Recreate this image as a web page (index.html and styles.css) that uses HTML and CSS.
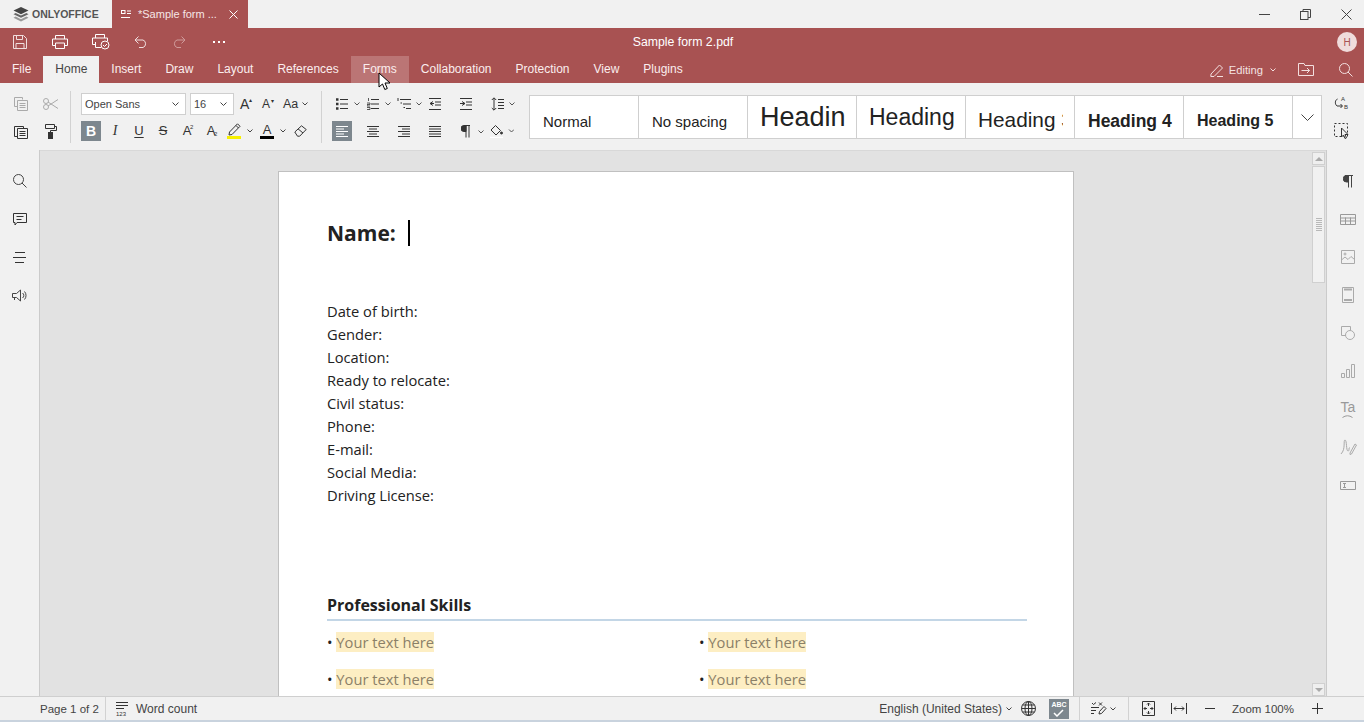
FILE: index.html
```html
<!DOCTYPE html>
<html lang="en">
<head>
<meta charset="utf-8">
<title>Sample form 2.pdf</title>
<link rel="stylesheet" href="styles.css">
</head>
<body>
<div class="app">
  <div class="titlebar">
    <div class="logo">
      <svg width="16" height="15" viewBox="0 0 16 15"><path d="M8 0 15.500 3.600 8 7.200.5 3.600Z" fill="#444"/><path d="M2.600 6 8 8.600 13.400 6 15.500 7.200 8 10.800.5 7.200Z" fill="#666"/><path d="M2.600 9.600 8 12.200 13.400 9.600 15.500 10.800 8 14.400.5 10.800Z" fill="#999"/></svg>
      <span>ONLYOFFICE</span>
    </div>
    <div class="doctab">
      <svg width="10" height="9" viewBox="0 0 10 9" fill="none" stroke="#fff"><rect x=".5" y=".5" width="3.500" height="3"/><path d="M6 1h4M6 3.500h4M0 7.500h9"/></svg>
      <span class="doctab-name">*Sample form ...</span>
      <svg width="9" height="9" viewBox="0 0 9 9" stroke="#fff" fill="none"><path d="M.5.500l8 8M8.500.5l-8 8"/></svg>
    </div>
    <div class="winbtns">
      <svg width="11" height="11" viewBox="0 0 11 11" stroke="#444" fill="none"><path d="M0 5.500h11"/></svg>
      <svg width="11" height="11" viewBox="0 0 11 11" stroke="#444" fill="none"><rect x=".5" y="2.500" width="7.500" height="8"/><path d="M3 2.500V.5h7.500v8H8"/></svg>
      <svg width="11" height="11" viewBox="0 0 11 11" stroke="#444" fill="none"><path d="M.5.500l10 10M10.500.5l-10 10"/></svg>
    </div>
  </div>

  <header class="ribbon">
    <div class="quick">
      <svg class="q q1" width="14" height="14" viewBox="0 0 14 14" fill="none" stroke="#f0dede"><path d="M.5.500h10l3 3v10H.5Z"/><path d="M3.500.5v4h6v-4M3 13.500v-5h8v5"/></svg>
      <svg class="q q2" width="16" height="14" viewBox="0 0 16 14" fill="none" stroke="#fff"><path d="M3.500 4V.5h9V4M3.500 10.500H.5V4h15v6.500h-3"/><path d="M3.500 8h9v5.500h-9Z"/></svg>
      <svg class="q q3" width="18" height="16" viewBox="0 0 18 16" fill="none" stroke="#fff"><path d="M3.500 4V.5h9V4M3.500 10.500H.5V4h15v3M3.500 8v5.500H9"/><circle cx="13" cy="11" r="4"/><path d="M11 11l1.500 1.500L15 10"/></svg>
      <svg class="q q4" width="14" height="12" viewBox="0 0 14 12" fill="none" stroke="#f0dede"><path d="M4.500.5 1 4l3.500 3.500M1 4h8a4 4 0 0 1 0 7.500H5"/></svg>
      <svg class="q q5" width="14" height="12" viewBox="0 0 14 12" fill="none" stroke="#cf9a9a"><path d="M9.500.5 13 4 9.500 7.500M13 4H5a4 4 0 0 0 0 7.500h4"/></svg>
      <svg class="q q6" width="12" height="3" viewBox="0 0 12 3" fill="#fff"><rect width="2" height="2"/><rect x="5" width="2" height="2"/><rect x="10" width="2" height="2"/></svg>
      <div class="filetitle">Sample form 2.pdf</div>
      <div class="avatar">H</div>
    </div>
    <nav class="tabs">
      <span class="tab">File</span>
      <span class="tab active">Home</span>
      <span class="tab">Insert</span>
      <span class="tab">Draw</span>
      <span class="tab">Layout</span>
      <span class="tab">References</span>
      <span class="tab hover">Forms</span>
      <span class="tab">Collaboration</span>
      <span class="tab">Protection</span>
      <span class="tab">View</span>
      <span class="tab">Plugins</span>
      <div class="tabs-right">
        <svg width="14" height="14" viewBox="0 0 14 14" fill="none" stroke="#f3dfdf"><path d="M1 11 9.500 2l3 3L4 13.500H.8ZM7 13.500h6"/></svg>
        <span class="editing">Editing</span>
        <svg class="caret-light" width="6" height="4" viewBox="0 0 6 4" fill="none" stroke="#f3dfdf"><path d="M.5.500 3 3 5.500.5"/></svg>
        <svg class="folder" width="16" height="13" viewBox="0 0 16 13" fill="none" stroke="#f3dfdf"><path d="M.5 12.500V.5H6l1 2h8.500v10ZM3.500 7.500h8M9 5l2.500 2.500L9 10"/></svg>
        <svg class="findtop" width="14" height="14" viewBox="0 0 14 14" fill="none" stroke="#f3dfdf"><circle cx="5.500" cy="5.500" r="5"/><path d="M9 9l4.500 4.500"/></svg>
      </div>
    </nav>
  </header>

  <section class="toolbar">
    <div class="tgroup g1">
      <svg width="14" height="14" viewBox="0 0 14 14" fill="none" stroke="#aaa"><path d="M.5.500h8v2M.5.500v9h3"/><path d="M3.500 3.500h10v10h-10ZM5.500 6.500h6M5.500 8.500h6M5.500 10.500h6"/></svg>
      <svg width="16" height="12" viewBox="0 0 16 12" fill="none" stroke="#aaa"><circle cx="3" cy="3" r="2.500"/><circle cx="3" cy="9" r="2.500"/><path d="M5 4l10 6.500M5 8 15 1.500"/></svg>
      <svg width="14" height="14" viewBox="0 0 14 14" fill="none" stroke="#333"><path d="M.5 1.500h9v2M.5 1.500v10h3"/><path d="M3.500 3.500h10v10h-10ZM5.500 6.500h6M5.500 8.500h6M5.500 10.500h6"/></svg>
      <svg width="12" height="15" viewBox="0 0 12 15" fill="none" stroke="#333"><path d="M.5.500h9v4h-9ZM9.500 2.500h2v4H5.500v2"/><rect x="3.500" y="8.500" width="4" height="6" fill="#333"/></svg>
    </div>
    <div class="tsep"></div>
    <div class="tgroup2">
      <div class="trow">
        <div class="combo font-combo"><span>Open Sans</span><svg width="7" height="4" viewBox="0 0 7 4" fill="none" stroke="#444"><path d="M.5.500 3.500 3.500 6.500.5"/></svg></div>
        <div class="combo size-combo"><span>16</span><svg width="7" height="4" viewBox="0 0 7 4" fill="none" stroke="#444"><path d="M.5.500 3.500 3.500 6.500.5"/></svg></div>
        <span class="glyph glyph-up">A<sup>▴</sup></span>
        <span class="glyph glyph-down">A<sup>▾</sup></span>
        <span class="glyph glyph-case">Aa</span>
        <svg class="tcaret" width="6" height="4" viewBox="0 0 6 4" fill="none" stroke="#444"><path d="M.5.500 3 3 5.500.5"/></svg>
      </div>
      <div class="trow row2">
        <span class="fmt bold">B</span>
        <span class="fmt italic">I</span>
        <span class="fmt under">U</span>
        <span class="fmt strike">S</span>
        <span class="fmt script">A<sup>2</sup></span>
        <span class="fmt script">A<sub>2</sub></span>
        <span class="colorbtn hl">
          <svg width="13" height="13" viewBox="0 0 13 13" fill="none" stroke="#333"><path d="M1 12 1.500 9 9.500.8l2.500 2.500-8 8.200ZM8 2.500l2.500 2.500"/></svg>
          <i class="swatch sw-yellow"></i>
        </span>
        <svg class="ccaret" width="6" height="4" viewBox="0 0 6 4" fill="none" stroke="#444"><path d="M.5.500 3 3 5.500.5"/></svg>
        <span class="colorbtn fc">
          <span class="fc-a">A</span>
          <i class="swatch sw-black"></i>
        </span>
        <svg class="ccaret" width="6" height="4" viewBox="0 0 6 4" fill="none" stroke="#444"><path d="M.5.500 3 3 5.500.5"/></svg>
        <svg class="eraser" width="13" height="12" viewBox="0 0 13 12" fill="none" stroke="#333"><path d="M.8 7 7.500.8l4.700 3.700-6.500 6.700H3.500ZM4 3.800 9 8"/></svg>
      </div>
    </div>
    <div class="tsep sep2"></div>
    <div class="tgroup3">
      <svg class="i1" width="24" height="12" viewBox="0 0 24 12" fill="none" stroke="#333"><path d="M4 1.500h8M4 6h8M4 10.500h8"/><path d="M0 1.500h2.500M0 6h2.500M0 10.500h2.500" stroke-width="2.400"/><path d="M18.500 4.500l2.500 2.500 2.500-2.500" stroke="#555"/></svg>
      <svg class="i2" width="24" height="12" viewBox="0 0 24 12" fill="none" stroke="#333"><path d="M4 1.500h8M4 6h8M4 10.500h8"/><path d="M1.500 0v3M0 5h3v1.500H0V8h3M0 9.500h3v2H0" stroke-width=".8"/><path d="M18.500 4.500l2.500 2.500 2.500-2.500" stroke="#555"/></svg>
      <svg class="i3" width="25" height="12" viewBox="0 0 25 12" fill="none" stroke="#333"><path d="M3 1.500h11M6 6h8M9 10.500h5"/><path d="M1 0v3M3.500 5h1.500M6.500 9.500h1.500"/><path d="M19.500 4.500l2.500 2.500 2.500-2.500" stroke="#555"/></svg>
      <svg class="i4" width="12" height="12" viewBox="0 0 12 12" fill="none" stroke="#333"><path d="M0 .5h12M6 4h6M6 7h6M0 11.500h12M4 3.500 1 5.500l3 2M1 5.500h4"/></svg>
      <svg class="i5" width="12" height="12" viewBox="0 0 12 12" fill="none" stroke="#333"><path d="M0 .5h12M6 4h6M6 7h6M0 11.500h12M2 3.500l3 2-3 2M0 5.500h5"/></svg>
      <svg class="i6" width="24" height="14" viewBox="0 0 24 14" fill="none" stroke="#333"><path d="M3 1v12M.8 3 3 .8 5.200 3M.8 11 3 13.200 5.200 11M7 2.500h6M7 5.500h6M7 8.500h6M7 11.500h6"/><path d="M18.500 5.500l2.500 2.500 2.500-2.500" stroke="#555"/></svg>
    </div>
    <div class="tgroup4">
      <span class="algn on">
        <svg width="12" height="11" viewBox="0 0 12 11" fill="none" stroke="#fff"><path d="M0 .5h12M0 3h8M0 5.500h12M0 8h8M0 10.500h12"/></svg>
      </span>
      <svg class="a2" width="12" height="11" viewBox="0 0 12 11" fill="none" stroke="#333"><path d="M0 .5h12M2 3h8M0 5.500h12M2 8h8M0 10.500h12"/></svg>
      <svg class="a3" width="12" height="11" viewBox="0 0 12 11" fill="none" stroke="#333"><path d="M0 .5h12M4 3h8M0 5.500h12M4 8h8M0 10.500h12"/></svg>
      <svg class="a4" width="12" height="11" viewBox="0 0 12 11" fill="none" stroke="#333"><path d="M0 .5h12M0 3h12M0 5.500h12M0 8h12M0 10.500h12"/></svg>
      <svg class="a5" width="26" height="13" viewBox="0 0 26 13" fill="none" stroke="#333"><path d="M3 .5h6M5 .5v12M8 .5v12"/><path d="M5 .5H3a2.500 2.500 0 0 0 0 6h2Z" fill="#333"/><path d="M17.500 5.500 20 8l2.500-2.500" stroke="#555"/></svg>
      <svg class="a6" width="24" height="14" viewBox="0 0 24 14" fill="none" stroke="#333"><path d="M1 6 5.500 1.500l5 5L6 11Z"/><circle cx="11.500" cy="9" r="1" fill="#333"/><path d="M0 13.500h13" stroke="#fff" stroke-width="1.500"/><path d="M19 5.500l2.500 2.500L24 5.500" stroke="#555"/></svg>
    </div>
    <div class="gallery">
      <div class="style st-normal">Normal</div>
      <div class="style st-normal">No spacing</div>
      <div class="style st-h1">Headin</div>
      <div class="style st-h2">Heading</div>
      <div class="style st-h3"><span>Heading 3</span></div>
      <div class="style st-h4">Heading 4</div>
      <div class="style st-h5">Heading 5</div>
      <div class="gallery-more"><svg width="13" height="7" viewBox="0 0 13 7" fill="none" stroke="#444"><path d="M.5.500l6 6 6-6"/></svg></div>
    </div>
    <div class="tgroup5">
      <svg width="16" height="14" viewBox="0 0 16 14" fill="none" stroke="#333"><path d="M3.500 3C1 4 .5 8 3 10h5M6.500 8 8.500 10 6.500 12"/><text x="7" y="5" class="mini">A</text><text x="10" y="13" class="mini">B</text></svg>
      <svg width="15" height="16" viewBox="0 0 15 16" fill="none" stroke="#333"><rect x=".5" y=".5" width="13" height="13" stroke-dasharray="2 2"/><path d="M7.500 5v9l2-2 1.500 3.500 1.500-.7-1.500-3.300h3Z" fill="#f1f1f1"/></svg>
    </div>
  </section>

  <main class="workspace">
    <aside class="leftpanel">
      <svg width="14" height="14" viewBox="0 0 14 14" fill="none" stroke="#444"><circle cx="5.500" cy="5.500" r="5"/><path d="M9 9l4.500 4.500"/></svg>
      <svg width="14" height="13" viewBox="0 0 14 13" fill="none" stroke="#333"><path d="M.5.500h13v9H4L2 12V9.500H.5ZM3.500 3.500h7M3.500 6.500h5"/></svg>
      <svg width="14" height="11" viewBox="0 0 14 11" fill="none" stroke="#333"><path d="M2 .5h10M0 5.500h13M2 10.500h9"/></svg>
      <svg width="15" height="13" viewBox="0 0 15 13" fill="none" stroke="#444"><path d="M.5 4.500h4l4-3.500v11l-4-3.500h-4ZM2.500 8.500V11M10.500 4a3 3 0 0 1 0 5M12.500 2.500a6 6 0 0 1 0 8"/></svg>
    </aside>
    <div class="canvas">
      <div class="docarea">
        <article class="page">
          <h1 class="doc-name">Name: <span class="cursor"></span></h1>
          <ul class="fields">
            <li>Date of birth:</li>
            <li>Gender:</li>
            <li>Location:</li>
            <li>Ready to relocate:</li>
            <li>Civil status:</li>
            <li>Phone:</li>
            <li>E-mail:</li>
            <li>Social Media:</li>
            <li>Driving License:</li>
          </ul>
          <h2 class="doc-section">Professional Skills</h2>
          <div class="skills">
            <p>• <mark>Your text here</mark></p>
            <p>• <mark>Your text here</mark></p>
            <p>• <mark>Your text here</mark></p>
            <p>• <mark>Your text here</mark></p>
          </div>
        </article>
      </div>
      <div class="scrollbar">
        <div class="sb-btn"><svg width="8" height="4" viewBox="0 0 8 4" fill="#aaa"><path d="M0 4 4 0l4 4Z"/></svg></div>
        <div class="sb-thumb"><i></i></div>
        <div class="sb-space"></div>
        <div class="sb-btn"><svg width="8" height="4" viewBox="0 0 8 4" fill="#aaa"><path d="M0 0h8L4 4Z"/></svg></div>
      </div>
    </div>
    <aside class="rightpanel">
      <svg width="10" height="13" viewBox="0 0 10 13" fill="none" stroke="#444"><path d="M2 .5h8M5.500.5v12M8.500.5v12"/><path d="M5.500.5H3.500a2.800 2.800 0 0 0 0 6.500h2Z" fill="#444"/></svg>
      <svg width="16" height="11" viewBox="0 0 16 11" fill="none" stroke="#999"><path d="M.5.500h15v10H.5ZM.5 4h15M.5 7h15M5.500 3.500v7M10.500 3.500v7" /></svg>
      <svg width="14" height="14" viewBox="0 0 14 14" fill="none" stroke="#aaa"><path d="M.5.500h13v13H.5ZM.5 10 4 7l3 2.500 3-3 3.500 3"/><circle cx="4" cy="4" r="1"/></svg>
      <svg width="12" height="16" viewBox="0 0 12 16" fill="none" stroke="#aaa"><path d="M.5.500h11v15H.5Z"/><path d="M2 2.500h8M2 13h8" stroke-width="2"/></svg>
      <svg width="14" height="14" viewBox="0 0 14 14" fill="none" stroke="#aaa"><path d="M5 9.500H.5V.5h9V4"/><circle cx="9" cy="9" r="4.500" fill="#f1f1f1"/></svg>
      <svg width="14" height="14" viewBox="0 0 14 14" fill="none" stroke="#aaa"><path d="M.5 9.500h3v4h-3ZM5.500 5.500h3v8h-3ZM10.500.5h3v13h-3Z"/></svg>
      <span class="ta"><span>Ta</span><svg width="11" height="3" viewBox="0 0 11 3" fill="none" stroke="#999"><path d="M.5 2.500Q5.500-1 10.500 2.500"/></svg></span>
      <svg width="17" height="16" viewBox="0 0 17 16" fill="none" stroke="#aaa"><path d="M1 15C6 10 3 1 5 1s1 11 3 11 0-4 2-3M10 14l5-9 1.500 1-5 9-1.500.5Z"/></svg>
      <svg width="16" height="9" viewBox="0 0 16 9" fill="none" stroke="#999"><path d="M.5.500h15v8H.5ZM3 2.500h3M4.500 2.500v4M3 6.500h3"/></svg>
    </aside>
  </main>

  <footer class="statusbar">
    <span class="st-page">Page 1 of 2</span>
    <span class="st-sep"></span>
    <svg class="wc-ico" width="13" height="14" viewBox="0 0 13 14" fill="none" stroke="#333"><path d="M0 .5h12M0 3.500h12M0 6.500h8"/><text x="0" y="14" class="mini">123</text></svg>
    <span class="st-wc">Word count</span>
    <div class="st-right">
      <span class="st-lang">English (United States)</span>
      <svg class="st-caret lang-caret" width="6" height="4" viewBox="0 0 6 4" fill="none" stroke="#444"><path d="M.5.500 3 3 5.500.5"/></svg>
      <svg class="globe" width="15" height="15" viewBox="0 0 15 15" fill="none" stroke="#333"><circle cx="7.500" cy="7.500" r="7"/><ellipse cx="7.500" cy="7.500" rx="3.500" ry="7"/><path d="M7.500.5v14M.5 7.500h14M1.500 4h12M1.500 11h12"/></svg>
      <span class="spell"><span>ABC</span><svg width="11" height="8" viewBox="0 0 11 8" fill="none" stroke="#fff" stroke-width="1.500"><path d="M1 4l3 3 6-6"/></svg></span>
      <span class="st-sep sep-a"></span>
      <svg class="track" width="16" height="13" viewBox="0 0 16 13" fill="none" stroke="#333"><path d="M0 5.500h8M0 8.500h5M0 11.500h3M8 12l.5-2.500L13 4.500l2 2-4.500 5ZM1 1l1.500 1.500L5 .5M8 .5l3 3M11 .5l-3 3"/></svg>
      <svg class="st-caret caret-b" width="6" height="4" viewBox="0 0 6 4" fill="none" stroke="#444"><path d="M.5.500 3 3 5.500.5"/></svg>
      <span class="st-sep sep-b"></span>
      <svg class="fit" width="13" height="15" viewBox="0 0 13 15" fill="none" stroke="#333"><path d="M.5.500h12v14H.5ZM6.500 2v3M5 3.500l1.500-1.500L8 3.500M6.500 13v-3M5 11.500 6.500 13 8 11.500M2 7.500h3M3.500 6 2 7.500 3.500 9M11 7.500H8M9.500 6 11 7.500 9.500 9"/></svg>
      <svg class="fitw" width="16" height="11" viewBox="0 0 16 11" fill="none" stroke="#333"><path d="M.5 0v11M15.500 0v11M3 5.500h10M5 3.500l-2 2 2 2M11 3.500l2 2-2 2"/></svg>
      <svg class="minus" width="10" height="1" viewBox="0 0 10 1" stroke="#333"><path d="M0 .5h10"/></svg>
      <span class="st-zoom">Zoom 100%</span>
      <svg class="plus" width="11" height="11" viewBox="0 0 11 11" stroke="#333"><path d="M0 5.500h11M5.500 0v11"/></svg>
    </div>
  </footer>
</div>
<svg class="pointer" width="13" height="19" viewBox="0 0 13 19"><path d="M1 1v14l3.500-3 2.300 5.500 2.500-1L7 11h5Z" fill="#fff" stroke="#000"/></svg>
</body>
</html>
```
FILE: styles.css
```css
* { box-sizing: border-box; }
html, body { margin: 0; height: 100%; overflow: hidden; }
body { font-family: "Liberation Sans", Arial, sans-serif; color: #333; background: #f1f1f1; }
svg { display: block; flex: none; }
.mini { font: 6px "Liberation Sans", sans-serif; fill: #333; stroke: none; }

.app { width: 1364px; height: 722px; display: flex; flex-direction: column; overflow: hidden; }

/* title bar */
.titlebar { height: 28px; flex: none; display: flex; align-items: stretch; background: #f1f1f1; }
.logo { width: 112px; padding-left: 13px; display: flex; align-items: center; gap: 3px; font-weight: bold; font-size: 10.500px; color: #555; }
.doctab { width: 136px; background: #a85252; color: #f6e6e6; display: flex; align-items: center; padding: 0 10px 0 9px; font-size: 11px; }
.doctab-name { margin-left: 7px; flex: 1; white-space: nowrap; }
.winbtns { margin-left: auto; display: flex; align-items: center; gap: 30px; padding-right: 12px; }

/* ribbon */
.ribbon { flex: none; background: #a85252; height: 55px; color: #fff; }
.quick { height: 28px; position: relative; display: flex; align-items: center; }
.q1 { margin-left: 13px; }
.q2 { margin-left: 25px; }
.q3 { margin-left: 24px; }
.q4 { margin-left: 24px; }
.q5 { margin-left: 24px; }
.q6 { margin-left: 27px; }
.filetitle { position: absolute; left: 0; right: -2px; text-align: center; font-size: 12.300px; color: #fff; }
.avatar { margin-left: auto; margin-right: 7px; width: 20px; height: 20px; border-radius: 50%; background: #f0dcdc; color: #a85252; font-size: 10px; display: flex; align-items: center; justify-content: center; }
.tabs { height: 27px; display: flex; align-items: stretch; font-size: 12px; }
.tab { padding: 0 12px 2px; display: flex; align-items: center; color: #fbeeee; }
.tab.active { background: #f1f1f1; color: #444; }
.tab.hover { background: #bb7575; }
.tabs-right { margin-left: auto; display: flex; align-items: center; color: #f3dfdf; padding-right: 11px; }
.editing { margin-left: 5px; font-size: 11.200px; color: #f3e2e2; }
.caret-light { margin-left: 7px; }
.folder { margin-left: 22px; }
.findtop { margin-left: 25px; }

/* toolbar */
.toolbar { height: 67px; flex: none; display: flex; align-items: stretch; background: #f1f1f1; position: relative; }
.tgroup { width: 70px; display: grid; grid-template-columns: 31px 30px; grid-template-rows: 28px 27px; padding: 7px 0 0 5px; justify-items: center; align-items: center; }
.tsep { width: 1px; margin: 8px 0 7px; background: #d2d2d2; flex: none; }
.tgroup2 { width: 250px; padding: 10px 0 0 10px; display: flex; flex-direction: column; gap: 6px; }
.trow { display: flex; align-items: center; height: 22px; }
.combo { height: 22px; background: #fff; border: 1px solid #cfcfcf; display: flex; align-items: center; justify-content: space-between; padding: 0 6px 0 3px; font-size: 11px; color: #444; }
.font-combo { width: 105px; }
.size-combo { width: 44px; margin-left: 4px; }
.glyph { font-size: 13px; color: #333; position: relative; }
.glyph sup { font-size: 6px; position: absolute; top: 0; left: 9px; }
.glyph-up { margin-left: 6px; font-size: 14px; width: 22px; }
.glyph-down { font-size: 12px; width: 19px; }
.glyph-case { margin-left: 2px; font-size: 12.500px; }
.tcaret { margin-left: 4px; }
.row2 { height: 20px; }
.fmt { width: 24px; text-align: center; font-size: 13px; color: #333; position: relative; line-height: 20px; }
.fmt sup, .fmt sub { font-size: 6px; position: absolute; line-height: 1; }
.fmt sup { top: 3px; left: 15px; }
.fmt sub { bottom: 4px; left: 15px; }
.bold { width: 20px; height: 20px; background: #7d878e; color: #fff; font-weight: bold; font-size: 14px; margin-right: 2px; }
.italic { font-style: italic; font-family: "Liberation Serif", serif; font-size: 14px; }
.under { text-decoration: underline; text-underline-offset: 2px; }
.strike { text-decoration: line-through; }
.colorbtn { position: relative; display: flex; flex-direction: column; align-items: center; width: 16px; }
.swatch { display: block; width: 14px; height: 3px; margin-top: 0; }
.sw-yellow { background: #f7f000; }
.sw-black { background: #000; }
.hl { margin-left: 3px; }
.fc { margin-left: 6px; }
.fc-a { font-size: 13px; line-height: 13px; color: #333; }
.ccaret { margin-left: 5px; }
.eraser { margin-left: 8px; }

.tgroup3, .tgroup4 { position: absolute; left: 322px; width: 200px; display: flex; align-items: center; }
.tgroup3 { top: 15px; height: 12px; }
.tgroup4 { top: 38px; height: 20px; }
.i1 { margin-left: 14px; }
.i2 { margin-left: 7px; }
.i3 { margin-left: 6px; }
.i4 { margin-left: 7px; }
.i5 { margin-left: 19px; }
.i6 { margin-left: 19px; }
.algn { margin-left: 10px; width: 20px; height: 20px; display: flex; align-items: center; justify-content: center; }
.algn.on { background: #7d878e; }
.a2 { margin-left: 15px; }
.a3 { margin-left: 19px; }
.a4 { margin-left: 19px; }
.a5 { margin-left: 20px; }
.a6 { margin-left: 3px; }

.gallery { position: absolute; left: 529px; top: 12px; width: 793px; height: 44px; display: flex; background: #fff; border: 1px solid #cfcfcf; overflow: hidden; }
.style { width: 109px; flex: none; border-right: 1px solid #cfcfcf; color: #222; padding-left: 13px; white-space: nowrap; overflow: hidden; display: flex; align-items: center; }
.st-normal { font-size: 15px; padding-top: 9px; }
.st-h1 { font-size: 27px; padding-left: 12px; padding-top: 1px; }
.st-h2 { font-size: 23px; padding-left: 12px; padding-top: 1px; }
.st-h3 { font-size: 20.800px; padding-left: 12px; padding-top: 6px; }
.st-h3 span { display: block; width: 85px; overflow: hidden; }
.st-h4 { font-size: 17.500px; font-weight: bold; padding-left: 13px; padding-top: 9px; }
.st-h5 { font-size: 16px; font-weight: bold; padding-left: 13px; padding-top: 8px; }
.gallery-more { flex: 1; display: flex; align-items: center; justify-content: center; }
.tgroup5 { position: absolute; left: 1334px; top: 13px; height: 43px; width: 16px; display: flex; flex-direction: column; justify-content: space-between; }

/* workspace */
.workspace { flex: 1; min-height: 0; display: flex; }
.leftpanel { width: 40px; flex: none; border-right: 1px solid #cbcbcb; background: #f1f1f1; display: grid; grid-auto-rows: 38px; justify-items: center; align-items: center; padding-top: 12px; align-content: start; }
.canvas { flex: 1; display: flex; background: #e2e2e2; min-width: 0; border-top: 1px solid #d8d8d8; }
.docarea { flex: 1; min-width: 0; overflow: hidden; display: flex; justify-content: center; padding-top: 20px; }
.page { width: 796px; height: 1030px; flex: none; background: #fff; border: 1px solid #c0c0c0; padding: 46px 46px 0 48px; font-family: "Open Sans", sans-serif; color: #222; }
.doc-name { margin: 0; font-size: 21px; line-height: 30px; font-weight: bold; color: #222; display: flex; align-items: center; gap: 12px; }
.cursor { display: inline-block; width: 2px; height: 26px; background: #000; }
.fields { list-style: none; margin: 52px 0 0; padding: 0; font-size: 14.700px; line-height: 23px; color: #222; }
.doc-section { margin: 86px 0 0; font-size: 16px; line-height: 24px; font-weight: bold; color: #222; border-bottom: 2px solid #c3d6e6; height: 28px; }
.skills { display: grid; grid-template-columns: 372px 1fr; row-gap: 17px; margin-top: 11px; font-size: 14.700px; }
.skills p { margin: 0; line-height: 20px; color: #222; }
.skills mark { background: #fdeec3; color: #8b8068; }

.scrollbar { width: 14px; flex: none; display: flex; flex-direction: column; padding-top: 1px; gap: 1px; }
.sb-btn { width: 13px; height: 13px; background: #efefef; border: 1px solid #d0d0d0; display: flex; align-items: center; justify-content: center; }
.sb-thumb { width: 13px; height: 117px; background: #f1f1f1; border: 1px solid #d0d0d0; display: flex; align-items: center; justify-content: center; }
.sb-thumb i { display: block; width: 6px; height: 14px; background: repeating-linear-gradient(#b8b8b8 0 1px, transparent 1px 2px); }
.sb-space { flex: 1; }
.rightpanel { width: 38px; flex: none; border-left: 1px solid #cbcbcb; background: #f1f1f1; display: grid; grid-auto-rows: 38px; justify-items: center; align-items: center; padding-top: 12px; padding-left: 5px; }
.ta { font-size: 14px; color: #999; line-height: 13px; display: flex; flex-direction: column; align-items: center; gap: 1px; }

/* status */
.statusbar { height: 26px; flex: none; display: flex; align-items: center; background: #f1f1f1; border-top: 1px solid #cfcfcf; border-bottom: 2px solid #c9d3de; font-size: 12px; color: #444; }
.st-page { margin-left: 40px; width: 60px; font-size: 11.500px; white-space: nowrap; }
.st-sep { width: 1px; height: 23px; background: #d2d2d2; flex: none; }
.statusbar > .st-sep { margin-left: 5px; }
.wc-ico { margin-left: 10px; }
.st-wc { margin-left: 7px; }
.st-right { margin-left: auto; display: flex; align-items: center; height: 23px; }
.st-lang { white-space: nowrap; }
.st-caret { margin-left: 6px; }
.lang-caret { margin-left: 4px; }
.globe { margin-left: 9px; }
.spell { margin-left: 13px; width: 20px; height: 20px; background: #7d878e; color: #fff; font-size: 7px; font-weight: bold; display: flex; flex-direction: column; align-items: center; justify-content: center; line-height: 8px; }
.sep-a { margin-left: 10px; }
.track { margin-left: 11px; }
.caret-b { margin-left: 3px; }
.sep-b { margin-left: 12px; }
.fit { margin-left: 13px; }
.fitw { margin-left: 16px; }
.minus { margin-left: 18px; }
.st-zoom { margin-left: 17px; font-size: 11.500px; }
.plus { margin-left: 18px; margin-right: 41px; }

/* mouse pointer captured in the screenshot */
.pointer { position: absolute; left: 378px; top: 72px; }
```
